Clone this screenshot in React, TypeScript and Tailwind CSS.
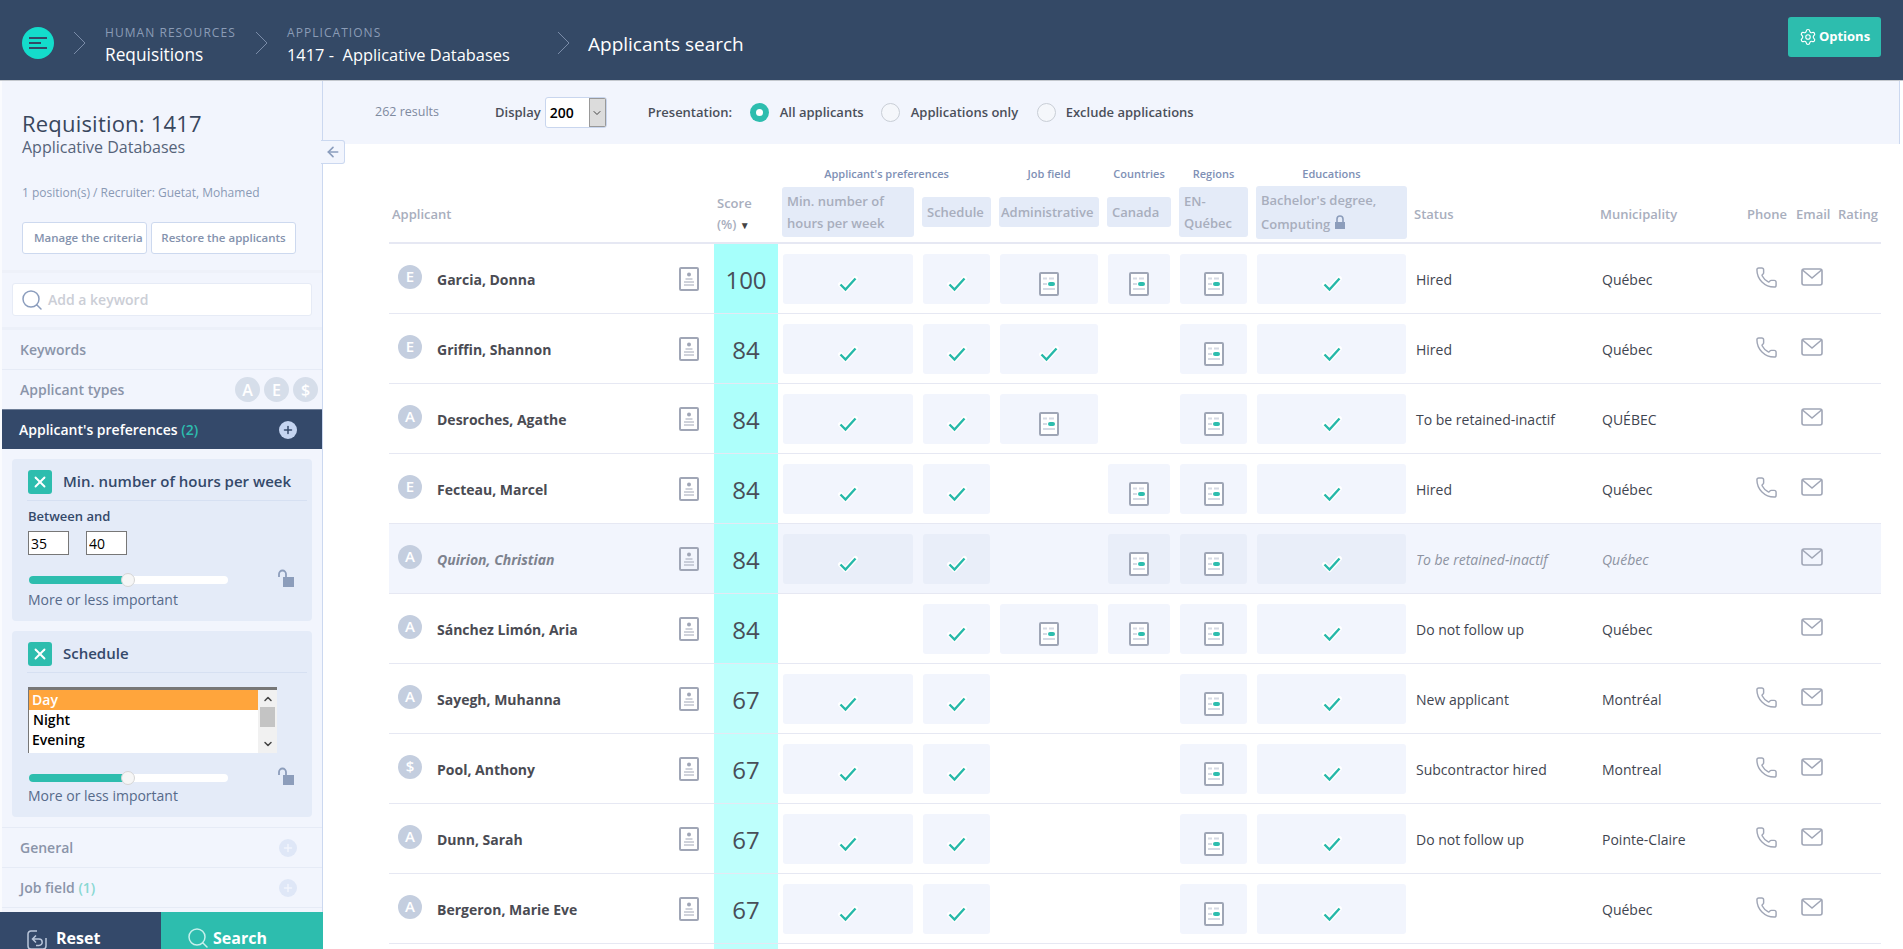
import React from "react";
import { Search, Settings, Phone, ArrowLeft, ChevronDown, ChevronUp, X, Plus } from "lucide-react";

const GRID = "grid grid-cols-[325px_64px_140px_77px_108px_72px_77px_159px_186px_142px_52px_45px_45px]";

type Mark = "c" | "d" | "";
type Row = { t: string; name: string; m: Mark[]; status: string; city: string; phone: boolean; score: string; bg: string; muted?: boolean };

const rows: Row[] = [
  { t: "E", name: "Garcia, Donna", m: ["c", "c", "d", "d", "d", "c"], status: "Hired", city: "Québec", phone: true, score: "100", bg: "bg-[#a6fffb]" },
  { t: "E", name: "Griffin, Shannon", m: ["c", "c", "c", "", "d", "c"], status: "Hired", city: "Québec", phone: true, score: "84", bg: "bg-[#aefffb]" },
  { t: "A", name: "Desroches, Agathe", m: ["c", "c", "d", "", "d", "c"], status: "To be retained-inactif", city: "QUÉBEC", phone: false, score: "84", bg: "bg-[#aefffb]" },
  { t: "E", name: "Fecteau, Marcel", m: ["c", "c", "", "d", "d", "c"], status: "Hired", city: "Québec", phone: true, score: "84", bg: "bg-[#aefffb]" },
  { t: "A", name: "Quirion, Christian", m: ["c", "c", "", "d", "d", "c"], status: "To be retained-inactif", city: "Québec", phone: false, score: "84", bg: "bg-[#aefffb]", muted: true },
  { t: "A", name: "Sánchez Limón, Aria", m: ["", "c", "d", "d", "d", "c"], status: "Do not follow up", city: "Québec", phone: false, score: "84", bg: "bg-[#aefffb]" },
  { t: "A", name: "Sayegh, Muhanna", m: ["c", "c", "", "", "d", "c"], status: "New applicant", city: "Montréal", phone: true, score: "67", bg: "bg-[#beFffc]" },
  { t: "$", name: "Pool, Anthony", m: ["c", "c", "", "", "d", "c"], status: "Subcontractor hired", city: "Montreal", phone: true, score: "67", bg: "bg-[#beFffc]" },
  { t: "A", name: "Dunn, Sarah", m: ["c", "c", "", "", "d", "c"], status: "Do not follow up", city: "Pointe-Claire", phone: true, score: "67", bg: "bg-[#beFffc]" },
  { t: "A", name: "Bergeron, Marie Eve", m: ["c", "c", "", "", "d", "c"], status: "", city: "Québec", phone: true, score: "67", bg: "bg-[#beFffc]" },
];

function Check() {
  return (
    <svg width="22" height="20" viewBox="0 0 22 20" className="block">
      <path d="M3.5 10.5 L8.5 15.5 L18.5 4.5" fill="none" stroke="#ffffff" strokeWidth="5" strokeLinecap="round" strokeLinejoin="round" />
      <path d="M3.5 10.5 L8.5 15.5 L18.5 4.5" fill="none" stroke="#25b8a9" strokeWidth="2.4" />
    </svg>
  );
}

function FilterDoc() {
  return (
    <svg width="20" height="24" viewBox="0 0 20 24" className="block">
      <rect x="1" y="1" width="18" height="22" rx="1" fill="#fff" stroke="#9fa6b6" strokeWidth="2" />
      <path d="M4 6.5h4M10 6.5h5M4 12h4M4 17h12" stroke="#d5dae4" strokeWidth="2" />
      <rect x="9" y="10" width="7" height="4" rx="2" fill="#2dbdae" />
    </svg>
  );
}

function PersonDoc() {
  return (
    <svg width="20" height="24" viewBox="0 0 20 24" className="block">
      <rect x="1" y="1" width="18" height="22" rx="1" fill="none" stroke="#a0a6b6" strokeWidth="2" />
      <circle cx="10" cy="7.5" r="2" fill="#a0a6b6" />
      <path d="M6.5 12h7M5 15h10M5 18h10" stroke="#a0a6b6" strokeWidth="1" />
    </svg>
  );
}

function MailIcon() {
  return (
    <svg width="22" height="18" viewBox="0 0 22 18" className="block">
      <rect x="1" y="1" width="20" height="16" rx="2" fill="none" stroke="#a0a6b6" strokeWidth="1.6" />
      <path d="M1.5 2 L11 10 L20.5 2" fill="none" stroke="#a0a6b6" strokeWidth="1.6" />
    </svg>
  );
}

function OpenLock() {
  return (
    <svg width="16" height="20" viewBox="0 0 16 20" className="block">
      <path d="M1 8V5a3.5 3.5 0 0 1 7 0v3" fill="none" stroke="#8c9dbb" strokeWidth="1.8" />
      <rect x="5" y="8" width="11" height="10" fill="#8c9dbb" />
    </svg>
  );
}

function Chevron() {
  return (
    <svg width="13" height="24" viewBox="0 0 13 24" className="block shrink-0 mt-[6px]">
      <path d="M1 1 L12 12 L1 23" fill="none" stroke="#7a8ca8" strokeWidth="1" />
    </svg>
  );
}

function Cell({ m, muted }: { m: Mark; muted?: boolean }) {
  if (!m) return <div />;
  return (
    <div className={`mx-[5px] mt-[10px] h-[50px] rounded-[3px] flex justify-center pt-[18px] ${muted ? "bg-[#e9eef9]" : "bg-[#f2f5fd]"}`}>
      {m === "c" ? <div className="pt-[2px]"><Check /></div> : <FilterDoc />}
    </div>
  );
}

function Avatar({ t, cls }: { t: string; cls: string }) {
  return <div className={`rounded-full flex items-center justify-center text-white font-semibold ${cls}`}>{t}</div>;
}

function HeadCell({ children, h }: { children: React.ReactNode; h: string }) {
  return <div className={`mx-[4px] px-[5px] bg-[#e4ebf8] rounded-[3px] text-[13px] leading-[24px] font-semibold text-[#a8aebd] flex items-center ${h}`}><div>{children}</div></div>;
}

function TableRow({ r }: { r: Row }) {
  const text = r.muted ? "italic text-[#8d93a1]" : "text-[#3f4550]";
  return (
    <div className={`${GRID} h-[70px] border-b border-[#e6e8f3] ${r.muted ? "bg-[#f2f5fd]" : ""}`}>
      <div className="flex items-center pl-[9px] pr-[15px]">
        <Avatar t={r.t} cls="w-[24px] h-[24px] bg-[#c4cedf] text-[15px] -mt-[4px]" />
        <div className={`ml-[15px] flex-1 text-[14px] font-bold mt-[2px] ${r.muted ? "italic text-[#7d828e]" : "text-[#4a4b53]"}`}>{r.name}</div>
        <PersonDoc />
      </div>
      <div className={`${r.bg} flex items-center justify-center text-[24px] font-medium pt-[2px] text-[#484e58]`}>{r.score}</div>
      {r.m.map((m, i) => <Cell key={i} m={m} muted={r.muted} />)}
      <div className={`flex items-center pl-[5px] pt-[2px] text-[14px] ${text}`}>{r.status}</div>
      <div className={`flex items-center pl-[5px] pt-[2px] text-[14px] ${text}`}>{r.city}</div>
      <div className="flex items-center justify-start pl-[16px]">{r.phone && <Phone size={23} strokeWidth={1.5} color="#a0a6b6" className="-mt-[2px]" />}</div>
      <div className="flex items-center pl-[10px]"><div className="-mt-[4px]"><MailIcon /></div></div>
      <div />
    </div>
  );
}

function Slider() {
  return (
    <div className="flex items-center h-[20px]">
      <div className="relative w-[199px] h-[8px] bg-white rounded-full ml-[1px]">
        <div className="h-[8px] w-[97px] bg-[#2dbdae] rounded-l-full" />
        <div className="absolute left-[92px] top-[-3px] w-[14px] h-[14px] rounded-full bg-[#f6f6f6] border border-[#d5d5d5]" />
      </div>
      <div className="ml-[50px] -mt-[3px]"><OpenLock /></div>
    </div>
  );
}

function CardTitle({ children }: { children: React.ReactNode }) {
  return (
    <div className="flex items-center h-[40px] pt-[2px] border-b border-[#d6e0f2] mr-[5px] ml-[-1px]">
      <div className="w-[24px] h-[24px] ml-[1px] bg-[#2dbdae] rounded-[3px] flex items-center justify-center">
        <X size={18} strokeWidth={2.5} color="#ffffff" />
      </div>
      <div className="ml-[11px] text-[15px] font-semibold text-[#34496a]">{children}</div>
    </div>
  );
}

function SectionRow({ label, count, plus, pl = "pl-[18px]" }: { label: string; count?: string; plus?: boolean; pl?: string }) {
  return (
    <div className={`flex items-center h-[40px] ${pl} border-b border-[#e6ebf6] text-[14px] font-semibold text-[#8a94a9]`}>
      <span>{label}{count && <span className="text-[#88d8d2]"> {count}</span>}</span>
      {plus && (
        <div className="ml-auto mr-[25px] w-[18px] h-[18px] rounded-full bg-[#dfe7f7] flex items-center justify-center">
          <Plus size={12} strokeWidth={3} color="#f2f5fd" />
        </div>
      )}
    </div>
  );
}

function Radio({ on, label, w, gap = "ml-[11px]" }: { on?: boolean; label: string; w: string; gap?: string }) {
  return (
    <div className={`flex items-center ${w}`}>
      {on ? (
        <div className="w-[19px] h-[19px] rounded-full bg-[#2dbdae] flex items-center justify-center"><div className="w-[7px] h-[7px] rounded-full bg-white" /></div>
      ) : (
        <div className="w-[19px] h-[19px] rounded-full bg-[#f5f7fb] border border-[#c9ced6]" />
      )}
      <span className={`${gap} text-[13px] font-semibold text-[#4a4f5a]`}>{label}</span>
    </div>
  );
}

export default function App() {
  return (
    <div className="h-[949px] w-[1903px] overflow-hidden bg-white font-['Open_Sans',sans-serif] flex flex-col">
      <header className="h-[81px] shrink-0 bg-[#344966] border-b border-[#c4c8ce] flex items-center pl-[22px] pr-[22px] text-white">
        <div className="w-[32px] h-[32px] rounded-full bg-[#14dccb] flex flex-col justify-center gap-[3px] pl-[7px] mt-[6px]">
          <div className="h-[2px] w-[18px] bg-[#344966]" />
          <div className="h-[2px] w-[12px] bg-[#344966]" />
          <div className="h-[2px] w-[18px] bg-[#344966]" />
        </div>
        <div className="ml-[19px]"><Chevron /></div>
        <div className="ml-[19px] w-[150px] mt-[13px]">
          <div className="text-[12px] leading-[16px] tracking-[1.05px] text-[#8b9cb6] whitespace-nowrap">HUMAN RESOURCES</div>
          <div className="text-[17.3px] leading-[26px] mt-[1px]">Requisitions</div>
        </div>
        <Chevron />
        <div className="ml-[19px] w-[270px] mt-[13px]">
          <div className="text-[12px] leading-[16px] tracking-[1.05px] text-[#8b9cb6]">APPLICATIONS</div>
          <div className="text-[16.4px] leading-[26px] mt-[1px]">1417 -&nbsp; Applicative Databases</div>
        </div>
        <Chevron />
        <div className="ml-[18px] text-[19px] mt-[8px]">Applicants search</div>
        <button className="ml-auto w-[93px] h-[40px] bg-[#2dbdae] rounded-[3px] flex items-center justify-center gap-[2px] text-[13px] font-bold text-white -mt-[6px]">
          <Settings size={18} strokeWidth={1.5} />Options
        </button>
      </header>

      <div className="flex flex-1 min-h-0">
        <aside className="w-[323px] shrink-0 flex flex-col bg-[#f2f5fd] border-r border-[#cbd8f0] border-l-2 border-l-[#fafbfe]">
          <div className="flex-1 min-h-0 overflow-hidden">
            <div className="pl-[20px] pt-[27px] h-[192px] border-b-[3px] border-[#eef1f9]">
              <div className="text-[22px] leading-[30px] tracking-[0.2px] text-[#39475d]">Requisition: 1417</div>
              <div className="text-[16px] leading-[20px] text-[#56647a] -mt-[1px]">Applicative Databases</div>
              <div className="mt-[28px] text-[12px] leading-[16px] text-[#8a9ab5]">1 position(s) / Recruiter: Guetat, Mohamed</div>
              <div className="flex gap-[4px] mt-[21px] text-[11.5px] font-semibold text-[#8492ad]">
                <div className="w-[125px] h-[32px] bg-white border border-[#cdd9ef] rounded-[3px] flex items-center pl-[11px] whitespace-nowrap">Manage the criteria</div>
                <div className="w-[145px] h-[32px] bg-white border border-[#cdd9ef] rounded-[3px] flex items-center justify-center whitespace-nowrap">Restore the applicants</div>
              </div>
            </div>
            <div className="h-[57px] pl-[10px] pt-[10px] border-b-[3px] border-[#ecf0f9]">
              <div className="w-[300px] h-[33px] bg-white border border-[#e6ebf6] rounded-[3px] flex items-center pl-[7px]">
                <Search size={24} strokeWidth={1.5} color="#8b9dbd" />
                <span className="ml-[4px] text-[14px] font-semibold text-[#cbced6]">Add a keyword</span>
              </div>
            </div>
            <SectionRow label="Keywords" />
            <div className="flex items-center h-[39px] pl-[18px] text-[14px] font-semibold text-[#8a94a9]">
              <span>Applicant types</span>
              <div className="ml-auto mr-[4px] flex gap-[4px]">
                {["A", "E", "$"].map((t) => <Avatar key={t} t={t} cls="w-[25px] h-[25px] bg-[#d6deea] text-[16px]" />)}
              </div>
            </div>
            <div className="h-[40px] bg-[#34496a] border-t border-[#6f7f98] flex items-center pl-[17px] text-[14px] font-semibold text-white">
              <span>Applicant's preferences <span className="text-[#2dbdae]">(2)</span></span>
              <div className="ml-auto mr-[25px] w-[18px] h-[18px] rounded-full bg-[#c5d5f1] flex items-center justify-center">
                <Plus size={12} strokeWidth={3} color="#34496a" />
              </div>
            </div>
            <div className="px-[10px] pt-[10px] pb-[10px] border-b border-[#e6ebf6]">
              <div className="h-[162px] bg-[#e4ebf8] rounded-[4px] pl-[16px] pt-[2px]">
                <CardTitle>Min. number of hours per week</CardTitle>
                <div className="mt-[6px] text-[13px] leading-[18px] font-semibold text-[#34496a]">Between and</div>
                <div className="flex gap-[17px] mt-[6px]">
                  <input readOnly value="35" className="w-[41px] h-[24px] bg-white border border-[#777] pl-[2px] text-[14px] text-black outline-none" />
                  <input readOnly value="40" className="w-[41px] h-[24px] bg-white border border-[#777] pl-[2px] text-[14px] text-black outline-none" />
                </div>
                <div className="mt-[15px]"><Slider /></div>
                <div className="text-[14px] leading-[20px] text-[#566a8a]">More or less important</div>
              </div>
              <div className="mt-[10px] h-[186px] bg-[#e4ebf8] rounded-[4px] pl-[16px] pt-[2px]">
                <CardTitle>Schedule</CardTitle>
                <div className="mt-[14px] w-[249px] h-[66px] bg-white border-t-[3px] border-l border-[#777] flex text-[14px] leading-[20px] font-semibold text-black overflow-hidden">
                  <div className="w-[229px] shrink-0">
                    <div className="bg-[#ffa53c] text-white pl-[3px]">Day</div>
                    <div className="pl-[4px]">Night</div>
                    <div className="pl-[3px]">Evening</div>
                  </div>
                  <div className="flex-1 bg-[#f1f1f1] flex flex-col items-center">
                    <ChevronUp size={12} strokeWidth={3} color="#444" className="mt-[3px]" />
                    <div className="w-[15px] h-[20px] bg-[#c4c4c4] mt-[2px]" />
                    <ChevronDown size={12} strokeWidth={3} color="#444" className="mt-auto mb-[3px]" />
                  </div>
                </div>
                <div className="mt-[15px]"><Slider /></div>
                <div className="text-[14px] leading-[20px] text-[#566a8a] -mt-[2px]">More or less important</div>
              </div>
            </div>
            <SectionRow label="General" plus />
            <SectionRow label="Job field" count="(1)" plus />
          </div>
          <div className="h-[37px] shrink-0 flex -ml-[2px] -mr-[1px] text-[16px] font-bold text-white overflow-hidden">
            <div className="w-[161px] h-[52px] bg-[#34496a] flex items-center pl-[27px]">
              <svg width="20" height="20" viewBox="0 0 20 20" className="block mt-[4px]">
                <path d="M10 1H4a3 3 0 0 0-3 3v12a3 3 0 0 0 3 3h12a3 3 0 0 0 3-3V8" fill="none" stroke="#b9c6da" strokeWidth="1.5" />
                <path d="M9 5.5 L5.5 9 L9 12.5 M6 9 H12 a3.2 3.2 0 0 1 0 6.4 H9" fill="none" stroke="#b9c6da" strokeWidth="1.5" />
              </svg>
              <span className="ml-[9px]">Reset</span>
            </div>
            <div className="flex-1 h-[52px] bg-[#2dbdae] flex items-center pl-[25px]">
              <Search size={24} strokeWidth={1.5} color="#c6f0ec" />
              <span className="ml-[3px]">Search</span>
            </div>
          </div>
        </aside>

        <main className="flex-1 min-w-0 relative">
          <div className="absolute left-[-2px] top-[59px] w-[24px] h-[24px] bg-[#f2f5fd] border border-[#cbd8f0] border-l-0 rounded-r-[3px] flex items-center justify-center">
            <ArrowLeft size={16} strokeWidth={2.5} color="#8b9dbd" />
          </div>
          <div className="h-[63px] bg-[#f2f5fd] mr-[3px] border-r border-[#cbd8f0] flex items-center text-[13px] text-[#4a4f5a]">
            <div className="ml-[52px] w-[120px] text-[12.5px] text-[#7f8a9f]">262 results</div>
            <div className="font-semibold">Display</div>
            <div className="ml-[4px] w-[62px] h-[31px] bg-white border border-[#c9d6ee] rounded-[3px] flex text-[14px] font-semibold text-black overflow-hidden">
              <div className="flex-1 pl-[4px] flex items-center">200</div>
              <div className="w-[17px] bg-[#dcdcdc] border border-[#999] flex items-center justify-center"><ChevronDown size={12} color="#444" /></div>
            </div>
            <div className="ml-[41px] w-[102px] font-semibold">Presentation:</div>
            <Radio on label="All applicants" w="w-[131px]" />
            <Radio label="Applications only" w="w-[156px]" />
            <Radio label="Exclude applications" w="w-[200px]" gap="ml-[10px]" />
          </div>

          <div className="ml-[66px] mt-[19px] w-[1492px]">
            <div className={`${GRID} h-[24px] text-[11px] font-semibold text-[#7e90b5] items-center text-center -mt-[1px]`}>
              <div className="col-start-3 col-span-2">Applicant's preferences</div>
              <div>Job field</div>
              <div>Countries</div>
              <div>Regions</div>
              <div>Educations</div>
            </div>
            <div className={`${GRID} h-[58px] border-b-2 border-[#e6e8f3] items-center text-[13px] font-semibold text-[#a8aebd]`}>
              <div className="pl-[3px] mt-[1px]">Applicant</div>
              <div className="leading-[21px] pl-[3px] mt-[1px]">Score<br />(%) <span className="text-[#444] text-[10px]">▼</span></div>
              <HeadCell h="h-[50px] -mt-[4px]"><div className="leading-[22px]">Min. number of hours per week</div></HeadCell>
              <HeadCell h="h-[30px] -mt-[4px]">Schedule</HeadCell>
              <HeadCell h="h-[30px] -mt-[4px] !px-[2px] whitespace-nowrap">Administrative</HeadCell>
              <HeadCell h="h-[30px] -mt-[4px]">Canada</HeadCell>
              <HeadCell h="h-[50px] -mt-[4px]"><div className="leading-[22px]">EN-<br />Québec</div></HeadCell>
              <HeadCell h="h-[53px] -mt-[4px]">
                <div className="leading-[24px]">Bachelor's degree,<br />Computing <svg width="12" height="16" viewBox="0 0 12 16" className="inline-block -mt-[8px]"><path d="M3 8V5a3 3 0 0 1 6 0v3" fill="none" stroke="#8c9dbb" strokeWidth="1.6" /><rect x="1" y="8" width="10" height="7" fill="#8c9dbb" /></svg></div>
              </HeadCell>
              <div className="pl-[3px] mt-[1px]">Status</div>
              <div className="pl-[3px] mt-[1px]">Municipality</div>
              <div className="pl-[8px] mt-[1px]">Phone</div>
              <div className="pl-[5px] mt-[1px]">Email</div>
              <div className="pl-[2px] mt-[1px]">Rating</div>
            </div>
            {rows.map((r) => <TableRow key={r.name} r={r} />)}
            <div className={`${GRID} h-[10px]`}>
              <div />
              <div className="bg-[#beFffc]" />
            </div>
          </div>
        </main>
      </div>
    </div>
  );
}
